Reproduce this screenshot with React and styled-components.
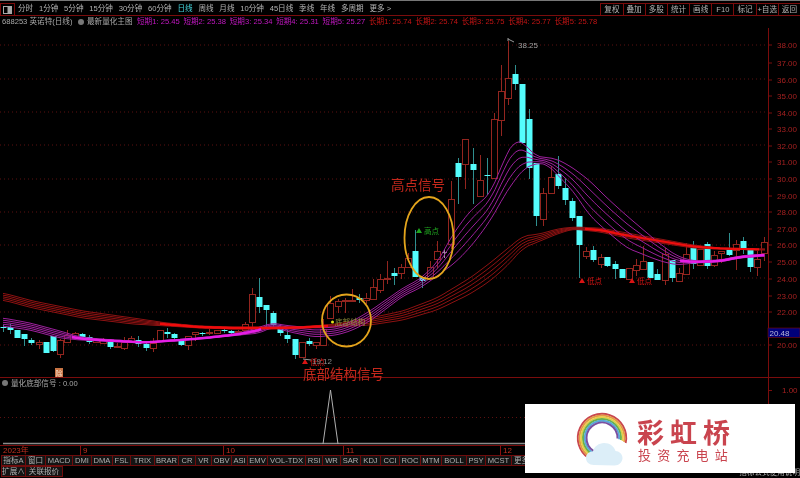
import React from "react";
import styled, { createGlobalStyle } from "styled-components";

const GlobalStyle = createGlobalStyle`
  html, body { margin: 0; padding: 0; background: #000; }
  #root { width: 800px; height: 478px; overflow: hidden; }
`;

const FONT = `"Liberation Sans", "Noto Sans CJK SC", sans-serif`;

// [x, bodyTop, bodyBottom, wickTop, wickBottom, kind]  u = up (hollow red), d = down (cyan)
const CANDLES = [
  [3, 326, 327, 324, 331, "d"], [10, 326, 329, 323, 333, "d"], [17, 329, 337, 329, 337, "d"], [24, 333, 338, 333, 345, "d"],
  [31, 339, 342, 337, 344, "d"], [39, 341, 343, 339, 348, "u"], [46, 341, 352, 341, 352, "d"], [53, 335, 350, 335, 351, "d"],
  [60, 339, 353, 338, 357, "u"], [67, 334, 341, 329, 341, "u"], [75, 332, 337, 331, 339, "u"], [82, 333, 336, 332, 338, "d"],
  [89, 336, 341, 334, 343, "d"], [96, 339, 341, 337, 342, "u"], [103, 339, 342, 337, 343, "u"], [110, 340, 346, 338, 348, "d"],
  [117, 345, 346, 342, 346, "u"], [124, 341, 347, 336, 349, "u"], [131, 337, 341, 335, 342, "u"], [138, 339, 343, 335, 346, "d"],
  [146, 343, 347, 340, 350, "d"], [153, 342, 347, 337, 351, "u"], [160, 329, 340, 329, 340, "u"], [167, 331, 333, 327, 337, "d"],
  [174, 333, 337, 332, 340, "d"], [181, 340, 344, 338, 345, "d"], [188, 335, 344, 335, 349, "u"], [195, 331, 333, 331, 340, "u"],
  [202, 332, 333, 331, 335, "d"], [209, 331, 332, 328, 334, "u"], [217, 329, 332, 329, 333, "u"], [224, 329, 330, 328, 332, "d"],
  [231, 330, 332, 329, 333, "d"], [238, 330, 331, 329, 332, "u"], [245, 323, 329, 321, 331, "u"], [252, 293, 321, 287, 327, "u"],
  [259, 296, 306, 277, 312, "d"], [266, 304, 309, 304, 327, "d"], [273, 312, 324, 310, 326, "d"], [280, 327, 332, 323, 335, "d"],
  [287, 334, 338, 329, 342, "d"], [295, 338, 354, 338, 358, "d"], [302, 341, 356, 341, 356, "u"], [309, 340, 343, 337, 345, "d"],
  [316, 341, 344, 341, 348, "u"], [323, 328, 344, 318, 344, "u"], [330, 302, 317, 295, 317, "u"], [338, 300, 305, 298, 312, "u"],
  [345, 299, 300, 297, 312, "u"], [352, 299, 300, 288, 301, "u"], [359, 297, 299, 293, 302, "d"], [366, 297, 299, 292, 303, "u"],
  [373, 286, 298, 278, 298, "u"], [380, 278, 289, 273, 292, "u"], [387, 277, 278, 260, 283, "u"], [394, 272, 275, 267, 284, "d"],
  [401, 266, 272, 263, 278, "u"], [408, 257, 266, 252, 266, "u"], [415, 250, 276, 229, 276, "d"], [422, 276, 280, 276, 287, "d"],
  [430, 266, 277, 260, 277, "u"], [437, 250, 258, 240, 267, "u"], [451, 198, 243, 180, 248, "u"], [458, 162, 176, 157, 203, "d"],
  [465, 138, 163, 138, 188, "u"], [473, 163, 169, 147, 203, "d"], [480, 179, 195, 154, 195, "u"], [487, 174, 175, 157, 194, "d"],
  [494, 118, 177, 112, 177, "u"], [501, 90, 119, 64, 135, "u"], [508, 77, 97, 40, 104, "u"], [515, 73, 83, 64, 89, "d"],
  [522, 83, 142, 83, 142, "d"], [529, 118, 167, 108, 178, "d"], [536, 162, 215, 162, 225, "d"], [543, 192, 218, 187, 225, "u"],
  [551, 176, 192, 165, 192, "u"], [558, 173, 185, 155, 188, "d"], [565, 187, 199, 177, 204, "d"], [572, 200, 217, 197, 220, "d"],
  [579, 215, 244, 215, 277, "d"], [586, 250, 255, 246, 258, "u"], [593, 249, 259, 245, 261, "d"], [601, 256, 263, 253, 267, "u"],
  [607, 256, 265, 256, 266, "d"], [615, 263, 268, 260, 278, "d"], [622, 268, 277, 268, 277, "d"], [629, 267, 278, 267, 278, "u"],
  [636, 264, 269, 258, 275, "u"], [643, 260, 268, 245, 268, "u"], [650, 261, 277, 261, 277, "d"], [657, 273, 279, 268, 279, "d"],
  [665, 253, 279, 247, 284, "u"], [672, 259, 277, 259, 281, "d"], [679, 272, 280, 267, 280, "u"], [686, 253, 273, 242, 273, "u"],
  [693, 247, 263, 240, 268, "d"], [700, 248, 264, 248, 264, "u"], [707, 243, 265, 241, 268, "d"], [714, 254, 264, 250, 266, "u"],
  [721, 250, 252, 250, 262, "u"], [729, 248, 254, 232, 255, "d"], [736, 243, 249, 239, 269, "u"], [743, 240, 247, 236, 253, "d"],
  [750, 249, 266, 247, 271, "d"], [757, 258, 266, 250, 275, "u"], [764, 241, 252, 236, 260, "u"],
];

const SHORT_TOP = [[3,317],[30,322],[60,330],[80,336],[100,338],[145,341],[200,337],[240,332],[260,326],[272,322],[290,325],[320,327],[337,326],[353,320],[370,310],[403,287],[420,278],[437,262],[453,233],[470,210],[490,193],[507,152],[515,139],[523,141],[535,155],[557,158],[573,167],[590,180],[607,197],[627,215],[660,243],[677,255],[693,260],[720,259],[740,255],[765,253]];
const SHORT_BOT = [[3,325],[30,329],[60,337],[80,339],[100,340],[145,342],[200,338],[240,334],[260,332],[272,326],[290,331],[315,336],[337,334],[353,329],[370,320],[403,295],[420,287],[440,273],[457,260],[473,243],[490,220],[507,190],[523,168],[537,162],[547,163],[573,190],[590,215],[610,233],[627,247],[660,260],[677,264],[693,262],[720,261],[740,257],[765,255]];
const LONG_TOP = [[3,292],[33,300],[83,310],[133,317],[167,322],[200,325],[233,326],[270,326],[300,326],[337,323],[370,317],[403,310],[437,297],[470,277],[490,262],[507,248],[523,235],[540,233],[557,228],[573,226],[600,227],[627,232],[660,238],[693,244],[720,247],[765,248]];
const LONG_BOT = [[3,299],[33,307],[83,317],[133,323],[167,325],[200,327],[233,328],[270,328],[300,327],[337,326],[370,324],[403,319],[437,309],[470,293],[490,280],[507,265],[523,247],[540,240],[557,233],[573,228],[600,231],[627,237],[660,242],[693,247],[720,248],[765,249]];

const at = (env, x) => {
  if (x <= env[0][0]) return env[0][1];
  for (let i = 1; i < env.length; i++) {
    if (x <= env[i][0]) {
      const [x0, y0] = env[i - 1];
      const [x1, y1] = env[i];
      return y0 + ((y1 - y0) * (x - x0)) / (x1 - x0);
    }
  }
  return env[env.length - 1][1];
};

const soft = (env, x) => (at(env, x - 5) + at(env, x) + at(env, x + 5)) / 3;

const bandPath = (top, bot, k, from = 3, to = 765) => {
  let d = "";
  for (let x = from; x <= to; x += 3) {
    const y = soft(top, x) * (1 - k) + soft(bot, x) * k;
    d += `${d ? "L" : "M"}${x} ${y.toFixed(1)}`;
  }
  return d;
};

const BAND = [0, 0.25, 0.5, 0.75, 1];
const GRID_Y = [44, 78, 111, 144, 178, 211, 244, 277, 311, 344];
const PRICES = [
  ["38.00", 44], ["37.00", 62], ["36.00", 79], ["35.00", 95], ["34.00", 112], ["33.00", 128], ["32.00", 145],
  ["31.00", 161], ["30.00", 178], ["29.00", 195], ["28.00", 211], ["27.00", 228], ["26.00", 244], ["25.00", 261],
  ["24.00", 278], ["23.00", 295], ["22.00", 311], ["20.00", 344],
];

const PERIODS = ["分时", "1分钟", "5分钟", "15分钟", "30分钟", "60分钟", "日线", "周线", "月线", "10分钟", "45日线", "季线", "年线", "多周期", "更多 >"];
const ACTIONS = ["复权", "叠加", "多股", "统计", "画线", "F10", "标记", "+自选", "返回"];
const SHORT_MA = ["25.45", "25.38", "25.34", "25.31", "25.27"];
const LONG_MA = ["25.74", "25.74", "25.75", "25.77", "25.78"];
const INDICATORS = [
  ["指标A", 25], ["窗口", 20], ["MACD", 27], ["DMI", 19], ["DMA", 21], ["FSL", 18], ["TRIX", 24], ["BRAR", 24], ["CR", 17],
  ["VR", 16], ["OBV", 20], ["ASI", 16], ["EMV", 20], ["VOL-TDX", 38], ["RSI", 17], ["WR", 18], ["SAR", 20], ["KDJ", 20],
  ["CCI", 19], ["ROC", 21], ["MTM", 21], ["BOLL", 25], ["PSY", 19], ["MCST", 26], ["更多", 20],
];

const Page = styled.div`
  position: relative;
  width: 800px;
  height: 478px;
  box-sizing: border-box;
  border-top: 1px solid #777;
  background: #000;
  font-family: ${FONT};
  display: flex;
  flex-direction: column;
  overflow: hidden;
  filter: blur(0.35px);
`;

const TopBar = styled.div`
  display: flex;
  height: 12px;
  margin-top: 2px;
  border-bottom: 1px solid #7a0c0c;
  box-sizing: content-box;
`;

const LayoutButton = styled.div`
  width: 15px;
  height: 12px;
  border: 1px solid #7a0c0c;
  border-bottom: 0;
  box-sizing: border-box;
  display: flex;
  align-items: center;
  justify-content: center;
`;

const Periods = styled.div`
  display: flex;
  align-items: center;
  gap: 5.75px;
  padding-left: 3px;
  flex: 1;
`;

const Period = styled.span`
  font-size: 7.6px;
  line-height: 12px;
  white-space: nowrap;
  color: ${(p) => (p.$active ? "#45d8e0" : "#b4b4b4")};
`;

const Actions = styled.div`
  display: flex;
`;

const Action = styled.span`
  width: 22.2px;
  height: 12px;
  box-sizing: border-box;
  border-left: 1px solid #7a0c0c;
  border-top: 1px solid #7a0c0c;
  font-size: 7.6px;
  line-height: 11px;
  text-align: center;
  color: #b4b4b4;
  white-space: nowrap;
`;

const InfoRow = styled.div`
  display: flex;
  align-items: center;
  height: 12px;
  padding-left: 2px;
  font-size: 7.6px;
  line-height: 12px;
  white-space: nowrap;
`;

const Ticker = styled.span`
  width: 74px;
  color: #a8a8a8;
`;

const Dot = styled.i`
  width: 6px;
  height: 6px;
  border-radius: 50%;
  background: #777;
  margin: 0 3px 0 2px;
`;

const ChartName = styled.span`
  width: 50px;
  color: #a8a8a8;
`;

const MaValue = styled.span`
  width: 46.4px;
  color: ${(p) => p.$color};
`;

const Main = styled.svg`
  display: block;
  width: 800px;
  height: 349px;
  flex: none;
  font-family: ${FONT};
`;

const Lower = styled.svg`
  display: block;
  width: 800px;
  height: 78px;
  flex: none;
  font-family: ${FONT};
`;

const Label = styled.text`
  font-size: ${(p) => p.$size || 8}px;
  fill: ${(p) => p.$color || "#a52020"};
`;

const Tabs = styled.div`
  display: flex;
  height: 11px;
  padding-left: 1px;
  flex: none;
`;

const Tab = styled.span`
  width: ${(p) => p.$w}px;
  height: 11px;
  box-sizing: border-box;
  border: 1px solid #6e0c0c;
  border-left-width: ${(p) => (p.$first ? 1 : 0)}px;
  background: #141414;
  color: #b0b0b0;
  font-size: 7.6px;
  line-height: 9px;
  text-align: center;
  white-space: nowrap;
  overflow: hidden;
`;

const Note = styled.span`
  margin-left: auto;
  align-self: flex-end;
  font-size: 7.6px;
  line-height: 9px;
  color: #aaa;
  white-space: nowrap;
`;

const BottomEdge = styled.div`
  height: 2px;
  margin-top: 1px;
  background: #c08a8a;
  flex: none;
`;

const Callout = styled.span`
  position: absolute;
  left: ${(p) => p.$x}px;
  top: ${(p) => p.$y}px;
  font-size: 13.5px;
  line-height: 16px;
  color: #c4281c;
  white-space: nowrap;
`;

const LogoCard = styled.div`
  position: absolute;
  left: 525px;
  top: 403px;
  width: 270px;
  height: 69px;
  background: #fff;
  display: flex;
  align-items: flex-start;
  padding: 7px 0 0 50px;
  box-sizing: border-box;
  gap: 2px;
`;

const Brand = styled.div`
  display: flex;
  flex-direction: column;
  padding-top: 6px;
  color: #c9444e;
`;

const BrandName = styled.span`
  font-family: "Noto Sans CJK SC", sans-serif;
  font-size: 27px;
  font-weight: 700;
  letter-spacing: 6px;
  line-height: 29px;
  white-space: nowrap;
`;

const BrandTag = styled.span`
  font-family: "Noto Sans CJK SC", sans-serif;
  font-size: 13px;
  letter-spacing: 6.2px;
  line-height: 15px;
  margin-top: 1px;
  padding-left: 1px;
  white-space: nowrap;
`;

const Candle = ({ c }) => {
  const [x, top, bot, wt, wb, kind] = c;
  if (kind === "d") {
    return (
      <g>
        <line x1={x + 0.5} x2={x + 0.5} y1={wt} y2={wb} stroke="#2f8f8f" />
        <rect x={x - 2.5} y={top} width={6} height={Math.max(bot - top, 1)} fill="#54fcfc" />
      </g>
    );
  }
  return (
    <g stroke="#93251f" fill="none">
      <line x1={x + 0.5} x2={x + 0.5} y1={wt} y2={top} />
      <line x1={x + 0.5} x2={x + 0.5} y1={bot} y2={wb} />
      <rect x={x - 2.5} y={top + 0.5} width={6} height={Math.max(bot - top, 1)} fill="#000" />
    </g>
  );
};

const Marker = ({ x, y, color, text }) => (
  <g>
    <polygon points={`${x},${y - 3} ${x - 3},${y + 2} ${x + 3},${y + 2}`} fill={color} />
    <Label x={x + 5} y={y + 3} $size={7.6} $color={color}>{text}</Label>
  </g>
);

const polar = (cx, cy, r, deg) => {
  const a = (deg * Math.PI) / 180;
  return [cx + r * Math.cos(a), cy + r * Math.sin(a)];
};

const RAINBOW = ["#c9474f", "#e39a45", "#e6cd45", "#6cb34a", "#58a8d8", "#7a4fa0"];

const Rainbow = () => (
  <svg width="60" height="58" viewBox="0 0 60 58">
    {RAINBOW.map((color, i) => {
      const r = 24.2 - i * 1.75;
      const [x0, y0] = polar(27, 27, r, 122);
      const [x1, y1] = polar(27, 27, r, 372 - i * 2);
      return <path key={color} d={`M${x0} ${y0}A${r} ${r} 0 1 1 ${x1} ${y1}`} fill="none" stroke={color} strokeWidth="1.9" />;
    })}
    <path
      d="M19 54c-5 0-8-3-8-7s3-6.500 7-6.500c1-5 6-8.500 11-8.500 6 0 10 3.500 11.500 8 3.500 0 7 3 7 7s-3.500 7.500-8 7.500z"
      fill="#dceef8"
    />
  </svg>
);

const LayoutIcon = ({ size = 8 }) => (
  <svg width={size + 1} height={size} viewBox="0 0 9 8">
    <rect x="0.5" y="0.5" width="8" height="7" fill="none" stroke="#a8a8a8" />
    <rect x="4.500" y="1" width="3.500" height="6" fill="#a8a8a8" />
  </svg>
);

export default function App() {
  return (
    <Page>
      <GlobalStyle />
      <TopBar>
        <LayoutButton><LayoutIcon /></LayoutButton>
        <Periods>
          {PERIODS.map((p) => (
            <Period key={p} $active={p === "日线"}>{p}</Period>
          ))}
        </Periods>
        <Actions>
          {ACTIONS.map((a) => <Action key={a}>{a}</Action>)}
        </Actions>
      </TopBar>
      <InfoRow>
        <Ticker>688253 英诺特(日线)</Ticker>
        <Dot />
        <ChartName>最新量化主图</ChartName>
        {SHORT_MA.map((v, i) => (
          <MaValue key={i} $color="#c418c4">短期{i + 1}: {v}</MaValue>
        ))}
        {LONG_MA.map((v, i) => (
          <MaValue key={i} $color="#c41414">长期{i + 1}: {v}</MaValue>
        ))}
      </InfoRow>

      <Main viewBox="0 27 800 349">
        {GRID_Y.map((y) => (
          <line key={y} x1="0" x2="768" y1={y} y2={y} stroke="#5c1010" strokeDasharray="1 3" />
        ))}
        {CANDLES.map((c) => <Candle key={c[0]} c={c} />)}
        <line x1="444.500" x2="444.500" y1="248" y2="257" stroke="#999" />
        <line x1="442" x2="447" y1="251.500" y2="251.500" stroke="#999" />

        {BAND.map((k) => (
          <path key={k} d={bandPath(LONG_TOP, LONG_BOT, k)} fill="none" stroke="#8e1212" />
        ))}
        {BAND.map((k) => (
          <path key={k} d={bandPath(SHORT_TOP, SHORT_BOT, k)} fill="none" stroke="#9c209c" />
        ))}
        <path d={bandPath(LONG_TOP, LONG_BOT, 0.5, 160, 330)} fill="none" stroke="#f00c0c" strokeWidth="2.500" />
        <path d={bandPath(LONG_TOP, LONG_BOT, 0.5, 585, 760)} fill="none" stroke="#ee0e0e" strokeWidth="2.200" />
        <path d={bandPath(SHORT_TOP, SHORT_BOT, 0.5, 72, 262)} fill="none" stroke="#e61ee6" strokeWidth="2.500" />
        <path d={bandPath(SHORT_TOP, SHORT_BOT, 0.5, 680, 765)} fill="none" stroke="#e61ee6" strokeWidth="2.500" />

        <ellipse cx="346.500" cy="319.500" rx="24.500" ry="26" fill="none" stroke="#e3a41c" strokeWidth="1.800" />
        <ellipse cx="429" cy="237" rx="24.500" ry="41" fill="none" stroke="#e3a41c" strokeWidth="1.800" />

        <path d="M508 40v-3M508 38l6 3" stroke="#999" fill="none" />
        <Label x="518" y="47" $color="#a0a0a0">38.25</Label>
        <Marker x={419} y={230} color="#1fa51f" text="高点" />
        <circle cx="332.500" cy="321" r="1.500" fill="#e6e61e" />
        <Label x="335" y="324" $size={7.6} $color="#8f8f3a">底部结构</Label>
        <Marker x={305} y={361} color="#d81414" text="低点" />
        <path d="M303 358l8 1" stroke="#999" />
        <Label x="312" y="363" $color="#8f8f8f">19.12</Label>
        <Marker x={582} y={280} color="#d81414" text="低点" />
        <Marker x={632} y={280} color="#d81414" text="低点" />

        <rect x="55" y="367" width="8" height="9" fill="#c87444" />
        <Label x="55.500" y="374.500" $size={7} $color="#f3dcc8">除</Label>

        <line x1="768.500" x2="768.500" y1="27" y2="376" stroke="#7a0c0c" />
        {PRICES.map(([t, y]) => (
          <g key={t}>
            <line x1="769" x2="772" y1={y} y2={y} stroke="#7a0c0c" />
            <Label x="777" y={y + 3}>{t}</Label>
          </g>
        ))}
        <rect x="768" y="327" width="32" height="9.500" fill="#00007a" stroke="#7a0c0c" strokeWidth="0.600" />
        <Label x="769.500" y="335" $color="#b8b8d8">20.48</Label>
        <path d="M750 18l3.500 3.500-3.500 3.500-3.500-3.500z" fill="none" stroke="#888" />
        <g transform="translate(758 17)">
          <rect x="0.500" y="0.500" width="7" height="6.500" fill="none" stroke="#999" />
          <rect x="0.500" y="0.500" width="2.500" height="6.500" fill="#999" />
        </g>
      </Main>

      <Lower viewBox="0 376 800 78">
        <line x1="0" x2="800" y1="376.500" y2="376.500" stroke="#7a0c0c" />
        <circle cx="5" cy="382" r="3" fill="#777" />
        <Label x="11" y="385" $size={7.6} $color="#a8a8a8">量化底部信号 : 0.00</Label>
        <line x1="0" x2="768" y1="416.500" y2="416.500" stroke="#5c1010" strokeDasharray="1 3" />
        <line x1="3" x2="768" y1="442.500" y2="442.500" stroke="#8a8a8a" strokeWidth="1.500" />
        <path d="M323 443L330.500 389L338 443" fill="none" stroke="#b0b0b0" />
        <line x1="0" x2="768" y1="444.500" y2="444.500" stroke="#7a0c0c" />
        <line x1="768.500" x2="768.500" y1="376" y2="445" stroke="#7a0c0c" />
        <line x1="769" x2="772" y1="389.500" y2="389.500" stroke="#7a0c0c" />
        <Label x="782" y="392">1.00</Label>
        <Label x="3" y="452" $size={8} $color="#c03020">2023年</Label>
        {[[80, "9"], [223, "10"], [343, "11"], [500, "12"]].map(([x, t]) => (
          <g key={t}>
            <line x1={x + 0.5} x2={x + 0.5} y1="445" y2="454" stroke="#8a1010" />
            <Label x={x + 3} y="452" $color="#c03020">{t}</Label>
          </g>
        ))}
      </Lower>

      <Tabs>
        {INDICATORS.map(([t, w], i) => (
          <Tab key={t} $w={w} $first={i === 0}>{t}</Tab>
        ))}
      </Tabs>
      <Tabs>
        <Tab $w={25} $first>扩展∧</Tab>
        <Tab $w={37}>关联报价</Tab>
        <Note>指标公式使用说明</Note>
      </Tabs>
      <BottomEdge />

      <Callout $x={391} $y={177}>高点信号</Callout>
      <Callout $x={303} $y={366}>底部结构信号</Callout>

      <LogoCard>
        <Rainbow />
        <Brand>
          <BrandName>彩虹桥</BrandName>
          <BrandTag>投资充电站</BrandTag>
        </Brand>
      </LogoCard>
    </Page>
  );
}
